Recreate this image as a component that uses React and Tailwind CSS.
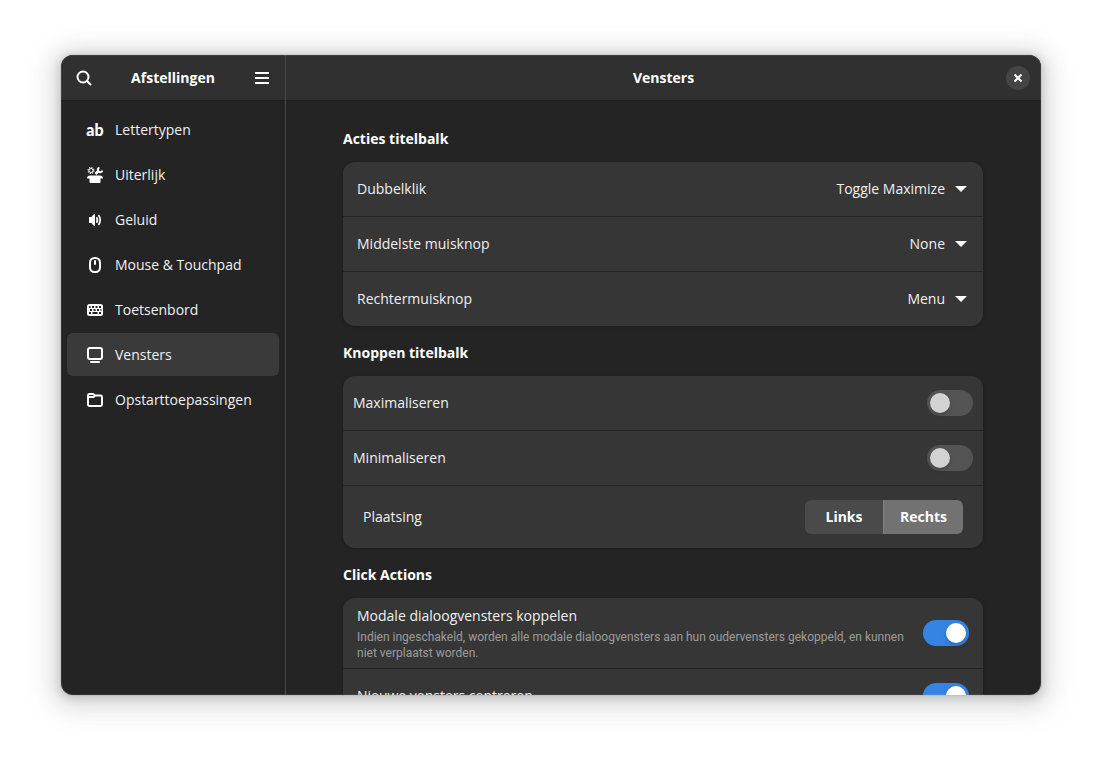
import React, { useState } from 'react';

const FontsIcon = () => (
  <span aria-hidden="true" className="w-4 flex justify-center font-['Lato',sans-serif] font-black text-base leading-5 text-white">ab</span>
);

const AppearanceIcon = () => (
  <svg width="16" height="16" viewBox="0 0 16 16" className="text-white">
    <circle cx="4" cy="3.500" r="2" fill="none" stroke="currentColor" strokeWidth="1" />
    <circle cx="4" cy="3.500" r="2.900" fill="none" stroke="currentColor" strokeWidth="1.200" strokeDasharray="1.2 1.08" />
    <path d="M12.500 .5a2.400 2.400 0 1 0 3 3" fill="none" stroke="currentColor" strokeWidth="2" />
    <path d="M12 3.500L8.500 7" fill="none" stroke="currentColor" strokeWidth="2.600" />
    <path d="M3.200 8.500h9.600c2 0 3.200 1.200 3.200 3h-2.500v3.200c0 .8-.5 1.300-1.300 1.300H3.800c-.8 0-1.300-.5-1.300-1.300v-3.200H0c0-1.800 1.200-3 3.200-3z" fill="currentColor" />
  </svg>
);

const SoundIcon = () => (
  <svg width="16" height="16" viewBox="0 0 16 16" className="text-white">
    <path d="M2 5h2.500L7 2h1v12H7l-2.500-3H2z" fill="currentColor" />
    <path d="M9.500 5.200c1.100 1.600 1.100 4 0 5.600M11.500 3c2 2.900 2 7.100 0 10" fill="none" stroke="currentColor" strokeWidth="1.700" />
  </svg>
);

const MouseIcon = () => (
  <svg width="16" height="16" viewBox="0 0 16 16" className="text-white">
    <rect x="3" y="1" width="10" height="14" rx="4.500" fill="none" stroke="currentColor" strokeWidth="2" />
    <path d="M8 4v3" stroke="currentColor" strokeWidth="2" strokeLinecap="round" />
  </svg>
);

const KeyboardIcon = () => (
  <svg width="16" height="16" viewBox="0 0 16 16">
    <rect x="0" y="2" width="16" height="12" rx="2.500" fill="#ffffff" />
    <path d="M2 5h1.500m1.500 0h2m1.500 0h2m1.500 0h2M3 8h2m1.500 0h2m1.500 0h2m1.500 0h1M2 11h2m1.500 0h5m1.500 0h2" stroke="#242424" strokeWidth="1.800" />
  </svg>
);

const WindowsIcon = () => (
  <svg width="16" height="16" viewBox="0 0 16 16" className="text-white">
    <rect x="1" y="1" width="14" height="11" rx="2" fill="none" stroke="currentColor" strokeWidth="2" />
    <path d="M4 15h8" stroke="currentColor" strokeWidth="2" strokeLinecap="round" />
  </svg>
);

const FolderIcon = () => (
  <svg width="16" height="16" viewBox="0 0 16 16" className="text-white">
    <path d="M1 5V3.500C1 2.500 1.500 2 2.500 2H6l2 1.500h5.500c1 0 1.500.5 1.500 1.500v7.500c0 1-.5 1.500-1.500 1.500h-11c-1 0-1.500-.5-1.500-1.500V5h5.500L8 3.500" fill="none" stroke="currentColor" strokeWidth="1.900" strokeLinejoin="round" />
  </svg>
);

const pages = [
  { name: 'Lettertypen', icon: FontsIcon },
  { name: 'Uiterlijk', icon: AppearanceIcon },
  { name: 'Geluid', icon: SoundIcon },
  { name: 'Mouse & Touchpad', icon: MouseIcon },
  { name: 'Toetsenbord', icon: KeyboardIcon },
  { name: 'Vensters', icon: WindowsIcon },
  { name: 'Opstarttoepassingen', icon: FolderIcon },
];

const Group = ({ title, children }) => (
  <section className="mb-[17px]">
    <h2 className="mb-[13px] font-bold leading-5 text-white">{title}</h2>
    <div className="rounded-xl bg-[#363636] divide-y divide-[#242424] shadow-[0_1px_3px_1px_rgba(0,0,0,0.14)]">
      {children}
    </div>
  </section>
);

const SelectRow = ({ id, label, options }) => (
  <div className="box-content flex items-center h-[54px] px-[14px]">
    <label htmlFor={id} className="flex-1">{label}</label>
    <select id={id} className="appearance-none field-sizing-content bg-transparent text-right outline-none">
      {options.map(option => <option key={option}>{option}</option>)}
    </select>
    <svg width="16" height="16" viewBox="0 0 16 16" className="ml-2 text-white pointer-events-none">
      <path d="M2 5h12l-6 6z" fill="currentColor" />
    </svg>
  </div>
);

const Switch = ({ id, defaultChecked }) => (
  <input
    id={id}
    type="checkbox"
    role="switch"
    defaultChecked={defaultChecked}
    className="appearance-none shrink-0 flex w-[46px] h-[26px] p-[3px] rounded-full bg-[#545454] checked:bg-[#3584e4] checked:justify-end before:w-5 before:h-5 before:rounded-full before:bg-[#d2d2d2] checked:before:bg-white before:shadow-[0_2px_4px_rgba(0,0,0,0.2)]"
  />
);

export default function App() {
  const [page, setPage] = useState('Vensters');
  const [placement, setPlacement] = useState('Rechts');

  return (
    <div className="h-screen flex bg-white pt-[55px] pb-[67px] px-[61px] font-['Open_Sans',sans-serif] text-sm text-[#f0f0f0]">
      <div className="relative flex-1 min-w-0 flex rounded-xl overflow-hidden bg-[#242424] shadow-[0_0_0_1px_rgba(0,0,0,0.05),0_2px_8px_2px_rgba(0,0,0,0.13),0_3px_20px_10px_rgba(0,0,0,0.09),0_6px_32px_16px_rgba(0,0,0,0.04)]">
        <aside className="w-[225px] shrink-0 border-r border-[#484848]">
          <header className="flex items-center justify-between h-[46px] px-[15px] bg-[#303030] border-b border-[#1e1e1e]">
            <button aria-label="Zoeken" className="text-white">
              <svg width="16" height="16" viewBox="0 0 16 16">
                <circle cx="7" cy="7" r="5.500" fill="none" stroke="currentColor" strokeWidth="2" />
                <path d="M11 11l4 4" stroke="currentColor" strokeWidth="2" />
              </svg>
            </button>
            <h1 className="font-bold text-white">Afstellingen</h1>
            <button aria-label="Menu" className="text-white">
              <svg width="16" height="16" viewBox="0 0 16 16">
                <path d="M1 3h14M1 8h14M1 13h14" stroke="currentColor" strokeWidth="2" />
              </svg>
            </button>
          </header>
          <nav className="flex flex-col gap-[2px] px-[6px] pt-[7px]">
            {pages.map(({ name, icon: Icon }) => (
              <button
                key={name}
                onClick={() => setPage(name)}
                className={`flex items-center gap-3 h-[43px] px-5 rounded-md text-left whitespace-nowrap ${page === name ? 'bg-[#3a3a3a]' : ''}`}
              >
                <Icon />
                {name}
              </button>
            ))}
          </nav>
        </aside>

        <main className="flex-1 min-w-0 flex flex-col">
          <header className="flex items-center shrink-0 h-[46px] px-[11px] bg-[#303030] border-b border-[#1e1e1e]">
            <h1 className="flex-1 pl-6 text-center font-bold text-white">Vensters</h1>
            <button aria-label="Sluiten" className="flex items-center justify-center w-6 h-6 rounded-full bg-[#444444] text-white">
              <svg width="16" height="16" viewBox="0 0 16 16">
                <path d="M4.500 4.500l7 7M11.500 4.500l-7 7" stroke="currentColor" strokeWidth="2" />
              </svg>
            </button>
          </header>

          <div className="flex-1 min-h-0 overflow-y-auto [scrollbar-width:none] pl-8 pr-[33px] pt-7">
            <div className="max-w-[640px] mx-auto">
              <Group title="Acties titelbalk">
                <SelectRow id="double" label="Dubbelklik" options={['Toggle Maximize', 'None', 'Menu']} />
                <SelectRow id="middle" label="Middelste muisknop" options={['None', 'Toggle Maximize', 'Menu']} />
                <SelectRow id="right" label="Rechtermuisknop" options={['Menu', 'None', 'Toggle Maximize']} />
              </Group>

              <Group title="Knoppen titelbalk">
                <div className="box-content flex items-center h-[54px] px-[10px]">
                  <label htmlFor="maximize" className="flex-1">Maximaliseren</label>
                  <Switch id="maximize" />
                </div>
                <div className="box-content flex items-center h-[54px] px-[10px]">
                  <label htmlFor="minimize" className="flex-1">Minimaliseren</label>
                  <Switch id="minimize" />
                </div>
                <div className="box-content flex items-center justify-between h-[62px] px-5">
                  <span>Plaatsing</span>
                  <div className="flex h-[34px] rounded-md overflow-hidden divide-x divide-[#808080] font-bold text-white">
                    {['Links', 'Rechts'].map(side => (
                      <button
                        key={side}
                        aria-pressed={placement === side}
                        onClick={() => setPlacement(side)}
                        className="w-[79px] bg-[#4a4a4a] aria-pressed:bg-[#727272]"
                      >
                        {side}
                      </button>
                    ))}
                  </div>
                </div>
              </Group>

              <Group title="Click Actions">
                <div className="box-content flex items-center gap-2 h-[70px] px-[14px]">
                  <div className="flex-1 min-w-0">
                    <label htmlFor="attach" className="block leading-5">Modale dialoogvensters koppelen</label>
                    <p className="mt-[3px] font-['Roboto',sans-serif] text-xs leading-4 text-[#9c9c9c]">
                      Indien ingeschakeld, worden alle modale dialoogvensters aan hun oudervensters gekoppeld, en kunnen niet verplaatst worden.
                    </p>
                  </div>
                  <Switch id="attach" defaultChecked />
                </div>
                <div className="box-content flex items-center h-[54px] px-[14px]">
                  <label htmlFor="center" className="flex-1">Nieuwe vensters centreren</label>
                  <Switch id="center" defaultChecked />
                </div>
              </Group>
            </div>
          </div>
        </main>
        <div className="absolute inset-0 rounded-xl pointer-events-none shadow-[inset_0_0_0_1px_rgba(255,255,255,0.07)]" />
      </div>
    </div>
  );
}
